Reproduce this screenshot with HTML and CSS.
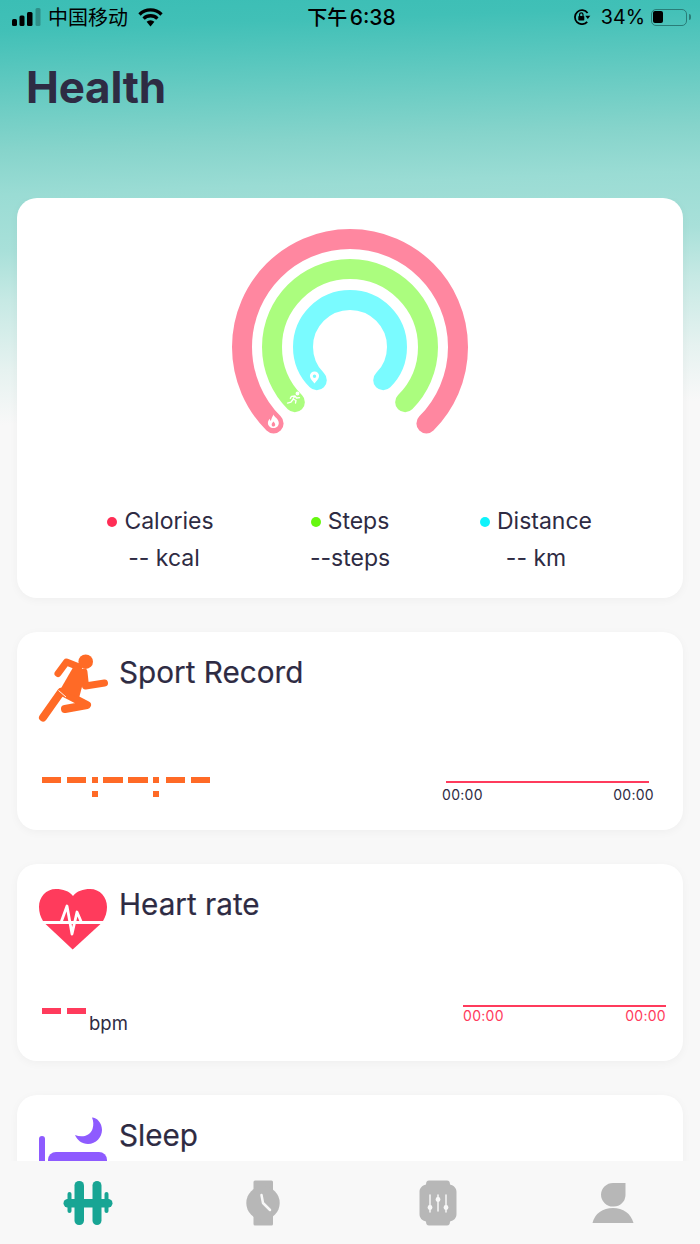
FILE: index.html
```html
<!DOCTYPE html>
<html lang="en">
<head>
<meta charset="utf-8">
<title>Health</title>
<link rel="stylesheet" href="styles.css">
</head>
<body>
<div class="app">
  <div class="status">
    <div class="status-side">
      <svg class="signal" viewBox="0 0 30 18" width="30" height="18"><rect x="0" y="11" width="5" height="7" rx="1.5"/><rect x="7.5" y="7.5" width="5" height="10.5" rx="1.5"/><rect x="15" y="4" width="5.5" height="14" rx="1.5"/><rect x="23.5" y="0" width="5" height="18" rx="1.5" opacity=".25"/></svg>
      <span class="carrier">中国移动</span>
      <svg class="wifi" viewBox="0 0 25 19" width="25" height="19"><path d="M1.5 6.5a15.5 15.5 0 0 1 22 0" /><path d="M5.6 10.6a9.8 9.8 0 0 1 13.8 0"/><path class="wedge" d="M8.6 13.8a5.6 5.6 0 0 1 7.8 0L12.5 18.5z"/></svg>
    </div>
    <div class="clock">下午 <span class="clock-time">6:38</span></div>
    <div class="status-side status-right">
      <svg class="rot" viewBox="0 0 18 16" width="18" height="16"><path d="M14.6 4A7 7 0 1 0 14.200 12.800"/><path class="wedge" d="M12.300 6.800h5L14.800 10z"/><rect class="wedge" x="5.300" y="7" width="6" height="4.600" rx=".8"/><path d="M6.600 7V5.600a1.700 1.700 0 0 1 3.400 0V7" class="thin"/></svg>
      <span class="pct">34%</span>
      <div class="battery"><div class="battery-fill"></div></div>
      <div class="battery-nub"></div>
    </div>
  </div>
  <h1 class="title">Health</h1>

  <main class="cards">
    <section class="card card-rings">
      <svg class="rings" viewBox="232 229 236 210" width="236" height="210">
        <path class="ring ring-pink" d="M273.6 423.4A108 108 0 1 1 426.4 423.4"/>
        <path class="ring ring-green" d="M294.85 402.15A78 78 0 1 1 405.15 402.15"/>
        <path class="ring ring-blue" d="M316.8 380.2A47 47 0 1 1 383.2 380.2"/>
        <path class="mini" d="M273.500 414.500c.6 2.400 5.300 4.400 5.300 8.400 0 3-2.400 5.100-5.400 5.100s-5.500-2.100-5.500-5c0-1.700.8-3.100 1.800-4.200.1 1 .5 1.700 1.200 2.100.4-2.300 1.700-4.400 2.600-6.400zM273.500 421.500c-.9 1.100-1.800 2-1.800 3.200 0 1 .7 1.900 1.700 1.900s1.800-.8 1.800-1.900c0-1.200-1-2-1.700-3.200z" fill-rule="evenodd"/>
        <g class="mini-line"><circle cx="297.500" cy="393.500" r="1.300" class="mini"/><path d="M295 396l-2 3 3 1.500-.5 2.500M295 396l-3.500.3-1.200 2M295 396l1.500 2 3-.3M293 399.500l-2 2.500-3.500 1"/></g>
        <path class="mini" fill-rule="evenodd" d="M314.500 371.500a4.600 4.600 0 0 1 4.600 4.600c0 2.900-2.900 5.400-4.600 7.400-1.700-2-4.600-4.500-4.600-7.400a4.600 4.600 0 0 1 4.600-4.600zm0 3a1.700 1.700 0 1 0 0 3.400 1.700 1.700 0 0 0 0-3.400z"/>
      </svg>
      <div class="legend">
        <div class="legend-col"><div class="legend-name legend-name-first"><i class="dot dot-pink"></i>Calories</div><div>-- kcal</div></div>
        <div class="legend-col"><div class="legend-name"><i class="dot dot-green"></i>Steps</div><div>--steps</div></div>
        <div class="legend-col"><div class="legend-name"><i class="dot dot-blue"></i>Distance</div><div>-- km</div></div>
      </div>
    </section>

    <section class="card">
      <div class="card-head">
        <svg class="card-icon" viewBox="39 655 68 70" width="68" height="70">
          <g class="run">
            <path d="M58 673.500L66.500 662L79 667"/>
            <path d="M84 672L85.500 686L104.500 683"/>
            <path class="run-thick" d="M61 692L43 717.500"/>
            <path class="run-thick" d="M62 692L87 705L65 709"/>
          </g>
          <path class="run-fill" d="M75 664L86 672L79 698L60 690z"/>
          <circle cx="85.700" cy="661.700" r="7.300" class="run-fill"/>
          <path class="run-cut" d="M58.500 690.500L66 697"/>
        </svg>
        <h2 class="card-title">Sport Record</h2>
      </div>
      <div class="card-foot foot-sport">
        <div class="digits digits-orange" role="img" aria-label="--:--:--">
          <i class="dash"></i><i class="dash"></i><i class="colon"></i><i class="dash dash-wide"></i><i class="dash dash-wide"></i><i class="colon colon-last"></i><i class="dash"></i><i class="dash"></i>
        </div>
        <div class="mini-chart chart-sport">
          <div class="chart-line"></div>
          <div class="chart-labels"><span>00:00</span><span>00:00</span></div>
        </div>
      </div>
    </section>

    <section class="card">
      <div class="card-head">
        <svg class="card-icon" viewBox="39 887 68 70" width="68" height="70">
          <path class="heart" d="M73 896C69 891 63 889 56 889C46 889 39 897 39 907C39 912 40.500 917 43 921H103C105.500 917 107 912 107 907C107 897 100 889 90 889C83 889 77 891 73 896Z"/>
          <path class="heart" d="M45.500 924H100.500L72.700 949.500Z"/>
          <path class="ecg-bar" d="M39 922.500H107"/>
          <path class="ecg" d="M61 922.500L67 906L72 934L77 912L81.500 922.500"/>
        </svg>
        <h2 class="card-title">Heart rate</h2>
      </div>
      <div class="card-foot foot-heart">
        <div class="value-wrap">
          <div class="digits digits-red" role="img" aria-label="--"><i class="dash"></i><i class="dash"></i></div>
          <span class="unit">bpm</span>
        </div>
        <div class="mini-chart chart-heart">
          <div class="chart-line"></div>
          <div class="chart-labels"><span>00:00</span><span>00:00</span></div>
        </div>
      </div>
    </section>

    <section class="card">
      <div class="card-head">
        <svg class="card-icon" viewBox="39 1118 68 70" width="68" height="70">
          <path class="sleep" d="M92 1117.500C97 1117.500 102 1123 102 1130C102 1137 96 1144 88 1144C82 1144 77 1140 75 1135C82 1138 90 1136 92.500 1129C93.800 1125 93.500 1121 92 1117.500Z"/>
          <rect class="sleep" x="39" y="1136" width="6" height="50" rx="3"/>
          <path class="sleep" d="M48 1186V1160A8 8 0 0 1 56 1152H99A8 8 0 0 1 107 1160V1186Z"/>
        </svg>
        <h2 class="card-title">Sleep</h2>
      </div>
    </section>
  </main>

  <nav class="tabs">
    <div class="tab">
      <svg viewBox="0 0 50 46" width="50" height="46" class="ico-active"><rect x="11.500" y="1" width="9.500" height="44" rx="4.500"/><rect x="29.500" y="1" width="9" height="44" rx="4.500"/><rect x="0.500" y="19" width="49" height="8.500" rx="4.200"/><rect x="4.500" y="12" width="4" height="21" rx="2"/><rect x="41.500" y="12" width="4" height="21" rx="2"/></svg>
    </div>
    <div class="tab">
      <svg viewBox="0 0 34 46" width="34" height="46" class="ico-muted"><path d="M9 0.500H25.500A1.500 1.500 0 0 1 27 2V10H7.500V2A1.500 1.500 0 0 1 9 0.500ZM7.500 35H27V44A1.500 1.500 0 0 1 25.500 45.500H9A1.500 1.500 0 0 1 7.500 44Z"/><circle cx="17" cy="23" r="16.700"/><path class="ico-hand" d="M15.500 15L17 23L24 30"/></svg>
    </div>
    <div class="tab">
      <svg viewBox="0 0 38 46" width="38" height="46" class="ico-muted"><path d="M10 0.500H28C30 0.500 31 2 31 4.500C35 5.500 37.500 8 37.500 12V34C37.500 38 35 40.500 31 41.500C31 44 30 45.500 28 45.500H10C8 45.500 7 44 7 41.500C3 40.500 0.500 38 0.500 34V12C0.500 8 3 5.500 7 4.500C7 2 8 0.500 10 0.500Z"/><g class="ico-slide"><path d="M11 15V32M19 15V31M27 15V32"/><circle cx="11" cy="27.500" r="1.700"/><circle cx="19" cy="19.500" r="1.700"/><circle cx="27" cy="27.500" r="1.700"/></g></svg>
    </div>
    <div class="tab">
      <svg viewBox="0 0 42 42" width="42" height="42" class="ico-muted"><path d="M21 1H33.500V13A11.700 11.700 0 0 1 21.500 24.500A12 12 0 0 1 9 12.500A12 12 0 0 1 21 1Z"/><path d="M0.500 41C2.500 31.500 11 26 21 26C31 26 39 31.500 41.500 41Z"/></svg>
    </div>
  </nav>
</div>
</body>
</html>
```

FILE: styles.css
```css
* { box-sizing: border-box; }
html, body { margin: 0; padding: 0; }
body { font-family: Inter, "Noto Sans CJK SC", sans-serif; color: #2e2b43; }

.app {
  width: 700px;
  height: 1244px;
  display: flex;
  flex-direction: column;
  overflow: hidden;
  background: linear-gradient(178deg, #3bbeb5 0, #41c0b7 30px, #86d4cb 150px, #9adcd4 195px, #a8e0d9 250px, #c6e9e4 300px, #e6f2f0 370px, #f8f8f8 425px);
}

.status {
  height: 34px;
  flex: none;
  display: flex;
  align-items: center;
  justify-content: space-between;
  padding: 0 9px 0 12px;
  color: #000;
}
.status-side { width: 200px; display: flex; align-items: center; }
.status-right { justify-content: flex-end; }
.signal { fill: #000; margin-right: 6px; }
.carrier { font: 400 20px/34px "Noto Sans CJK SC", sans-serif; width: 90px; }
.wifi { fill: none; stroke: #000; stroke-width: 3.300; }
.wedge { fill: #000; stroke: none; }
.clock { font: 500 20px/34px "Noto Sans CJK SC", Inter, sans-serif; word-spacing: -2px; }
.clock-time { font: 500 21px/34px Inter, sans-serif; }
.rot { fill: none; stroke: #000; stroke-width: 1.800; margin-right: 10px; }
.thin { stroke-width: 1.200; }
.pct { font: 400 19.700px/34px Inter, sans-serif; margin-right: 6px; }
.battery {
  width: 36px; height: 17px;
  border: 1.500px solid #2a7d78;
  border-radius: 5px;
  padding: 1.500px;
}
.battery-fill { width: 10px; height: 100%; background: #000; border-radius: 2px; }
.battery-nub { width: 2px; height: 6px; margin-left: 2px; background: #2a7d78; border-radius: 0 2px 2px 0; }

.title {
  margin: 0;
  padding: 25px 0 0 26px;
  height: 164px;
  flex: none;
  font-size: 44px;
  line-height: 56px;
  font-weight: 700;
  letter-spacing: -0.2px;
}

.cards {
  flex: 1;
  min-height: 0;
  overflow: hidden;
  padding: 0 17px;
  display: flex;
  flex-direction: column;
  gap: 34px;
}
.card {
  flex: none;
  height: 197.500px;
  background: #fff;
  border-radius: 20px;
  box-shadow: 0 2px 10px rgba(0, 0, 0, .04);
  padding: 23px 17px 0 22px;
}
.card-rings {
  height: 400px;
  padding: 31px 0 0;
  display: flex;
  flex-direction: column;
  align-items: center;
}
.rings { display: block; }
.ring { fill: none; stroke-width: 20; stroke-linecap: round; }
.ring-pink { stroke: #ff87a0; }
.ring-green { stroke: #abfd7e; }
.ring-blue { stroke: #7afbff; }
.mini { fill: #fff; }
.mini-line { fill: none; stroke: #fff; stroke-width: 1.300; stroke-linecap: round; stroke-linejoin: round; }

.legend { display: flex; justify-content: center; margin-top: 64px; }
.legend-col { width: 186px; text-align: center; font-size: 23px; line-height: 37px; }
.legend-name { display: flex; align-items: center; justify-content: center; gap: 7px; }
.legend-name-first { padding-right: 7px; }
.dot { width: 10px; height: 10px; border-radius: 50%; }
.dot-pink { background: #ff2d55; }
.dot-green { background: #66f70f; }
.dot-blue { background: #0ff3fb; }

.card-head { display: flex; gap: 12px; height: 70px; }
.card-icon { flex: none; display: block; overflow: visible; }
.card-title { margin: 0; font-size: 29.700px; line-height: 34px; font-weight: 400; -webkit-text-stroke: .2px currentColor; }

.run { fill: none; stroke: #ff6a26; stroke-width: 7; stroke-linecap: round; stroke-linejoin: round; }
.run-thick { stroke-width: 8; }
.run-fill { fill: #ff6a26; stroke: none; }
.run-cut { fill: none; stroke: #fff; stroke-width: .9; }
.heart { fill: #ff3b5c; }
.ecg-bar { fill: none; stroke: #fff; stroke-width: 2.400; }
.ecg { fill: none; stroke: #fff; stroke-width: 2.800; stroke-linejoin: round; }
.sleep { fill: #8e5bff; }

.card-foot { display: flex; justify-content: space-between; align-items: flex-start; }
.foot-sport { margin-top: 52px; padding: 0 12px 0 3px; }
.foot-heart { margin-top: 48px; padding: 0 0 0 3px; }

.digits { display: flex; }
.digits-orange { --c: #ff6a26; }
.digits-red { --c: #ff3b5c; margin-top: 3px; }
.dash { width: 19px; height: 6px; margin-right: 6px; background: var(--c); }
.dash-wide { width: 20px; margin-right: 5px; }
.colon {
  width: 6px; height: 20px;
  margin-right: 5px;
  background: linear-gradient(var(--c) 0 6px, transparent 6px 14px, var(--c) 14px);
}
.colon-last { margin-right: 7px; }
.value-wrap { display: flex; align-items: flex-start; }
.unit { font-size: 18.500px; line-height: 20px; margin: 8px 0 0 -3px; }

.mini-chart { font-size: 14px; line-height: 18px; letter-spacing: .3px; }
.chart-line { height: 2px; background: #ff3b5c; }
.chart-sport { width: 212px; margin-top: 4px; color: #2e2b43; }
.chart-sport .chart-line { margin: 0 5px 3px 4px; }
.chart-heart { width: 203px; color: #ff3b5c; }
.chart-labels { display: flex; justify-content: space-between; }

.tabs {
  flex: none;
  height: 83px;
  display: flex;
  background: #f8f8f8;
}
.tab { flex: 1; display: flex; align-items: center; justify-content: center; }
.ico-active { fill: #18a594; }
.ico-muted { fill: #b7b7b7; }
.ico-hand { fill: none; stroke: #f8f8f8; stroke-width: 2.500; stroke-linecap: round; stroke-linejoin: round; }
.ico-slide { fill: #f8f8f8; stroke: #f8f8f8; stroke-width: 1.500; stroke-linecap: round; }
```
